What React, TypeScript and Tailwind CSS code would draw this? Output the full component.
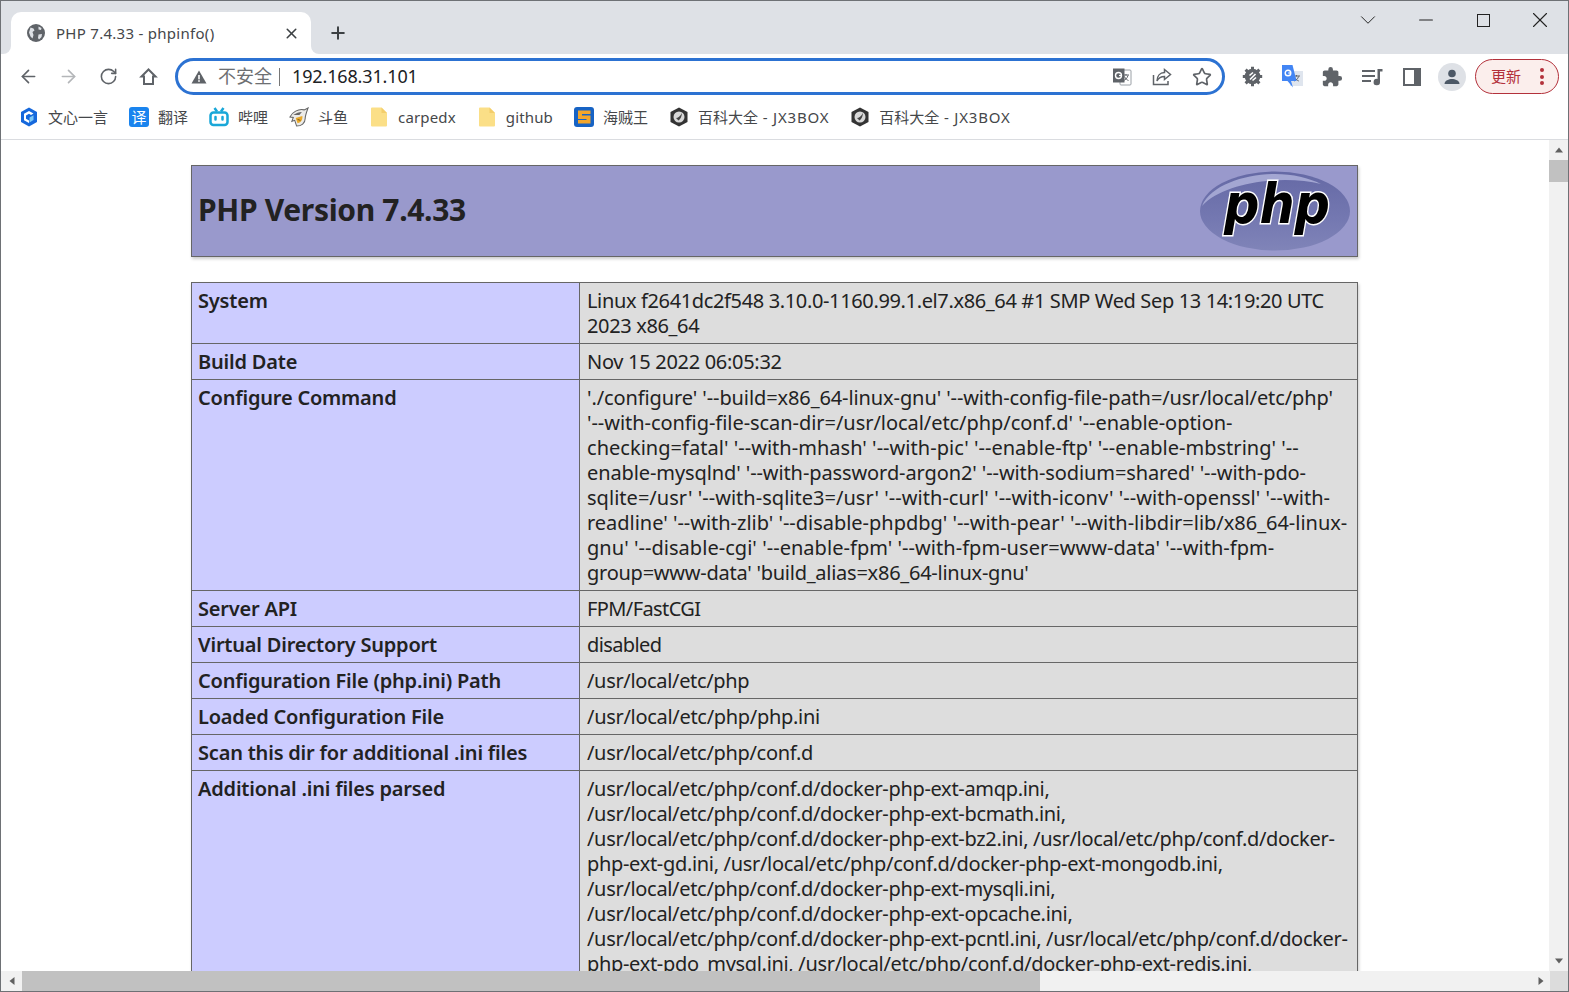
import { ArrowLeft, ArrowRight, ChevronDown, Minus, Plus, RotateCw, Star, X } from 'lucide-react';
import { MdExtension } from 'react-icons/md';
import type { ReactNode } from 'react';

// letter spacing is per row, the fallback font's digits and slashes run wider than the original's
const rows: { label: string; tracking: string; lines: string[]; lineTracking?: string[] }[] = [
  {
    label: 'System',
    tracking: 'tracking-[-0.36px]',
    lines: ['Linux f2641dc2f548 3.10.0-1160.99.1.el7.x86_64 #1 SMP Wed Sep 13 14:19:20 UTC', '2023 x86_64'],
  },
  { label: 'Build Date', tracking: 'tracking-[-0.3px]', lines: ['Nov 15 2022 06:05:32'] },
  {
    label: 'Configure Command',
    tracking: '',
    lineTracking: [
      'tracking-[-0.1px]',
      'tracking-[-0.05px]',
      'tracking-[0.03px]',
      'tracking-[-0.1px]',
      'tracking-[0.03px]',
      'tracking-[-0.02px]',
      'tracking-[0.04px]',
      'tracking-[-0.25px]',
    ],
    lines: [
      "'./configure' '--build=x86_64-linux-gnu' '--with-config-file-path=/usr/local/etc/php'",
      "'--with-config-file-scan-dir=/usr/local/etc/php/conf.d' '--enable-option-",
      "checking=fatal' '--with-mhash' '--with-pic' '--enable-ftp' '--enable-mbstring' '--",
      "enable-mysqlnd' '--with-password-argon2' '--with-sodium=shared' '--with-pdo-",
      "sqlite=/usr' '--with-sqlite3=/usr' '--with-curl' '--with-iconv' '--with-openssl' '--with-",
      "readline' '--with-zlib' '--disable-phpdbg' '--with-pear' '--with-libdir=lib/x86_64-linux-",
      "gnu' '--disable-cgi' '--enable-fpm' '--with-fpm-user=www-data' '--with-fpm-",
      "group=www-data' 'build_alias=x86_64-linux-gnu'",
    ],
  },
  { label: 'Server API', tracking: 'tracking-[-0.6px]', lines: ['FPM/FastCGI'] },
  { label: 'Virtual Directory Support', tracking: 'tracking-[-0.6px]', lines: ['disabled'] },
  { label: 'Configuration File (php.ini) Path', tracking: 'tracking-[-0.33px]', lines: ['/usr/local/etc/php'] },
  { label: 'Loaded Configuration File', tracking: 'tracking-[-0.3px]', lines: ['/usr/local/etc/php/php.ini'] },
  { label: 'Scan this dir for additional .ini files', tracking: 'tracking-[-0.32px]', lines: ['/usr/local/etc/php/conf.d'] },
  {
    label: 'Additional .ini files parsed',
    tracking: 'tracking-[-0.32px]',
    lines: [
      '/usr/local/etc/php/conf.d/docker-php-ext-amqp.ini,',
      '/usr/local/etc/php/conf.d/docker-php-ext-bcmath.ini,',
      '/usr/local/etc/php/conf.d/docker-php-ext-bz2.ini, /usr/local/etc/php/conf.d/docker-',
      'php-ext-gd.ini, /usr/local/etc/php/conf.d/docker-php-ext-mongodb.ini,',
      '/usr/local/etc/php/conf.d/docker-php-ext-mysqli.ini,',
      '/usr/local/etc/php/conf.d/docker-php-ext-opcache.ini,',
      '/usr/local/etc/php/conf.d/docker-php-ext-pcntl.ini, /usr/local/etc/php/conf.d/docker-',
      'php-ext-pdo_mysql.ini, /usr/local/etc/php/conf.d/docker-php-ext-redis.ini,',
    ],
  },
];

const Globe = () => (
  <svg width="18" height="18" viewBox="0 0 18 18">
    <circle cx="9" cy="9" r="9" fill="#5f6368" />
    <path d="M3.500 3.500 6.500 4.500 7.500 6.500 5.500 8 6.500 11 5.500 14.500 3.500 12.500 2 8.500ZM11.500 2.500 14.500 4 14 6 11.500 5.500ZM11.500 10.500 15 10 14.500 13 12 15.500 11 14Z" fill="#dee1e6" />
  </svg>
);

const Warning = () => (
  <svg width="16" height="16" viewBox="0 0 16 16">
    <path d="M8 1.500 15.500 14.500H.5Z" fill="#5f6368" />
    <rect x="7.200" y="6" width="1.600" height="4.400" fill="#fff" />
    <rect x="7.200" y="11.200" width="1.600" height="1.600" fill="#fff" />
  </svg>
);

const Home = () => (
  <svg width="19" height="19" viewBox="0 0 19 19" fill="none" stroke="#5f6368" strokeWidth="2" strokeLinejoin="miter">
    <path d="M9.500 2.500 2.500 9.500H5V17H14V9.500H16.500Z" />
  </svg>
);

const TranslateBadge = () => (
  <svg width="20" height="20" viewBox="0 0 20 20">
    <rect x="8" y="3" width="11" height="15" rx="1" fill="#fff" stroke="#9aa0a6" />
    <path d="M11 8h6M14 7v1.500M16 8.500c-.8 3-3 4.500-4.500 5M12.500 9.500c.8 2 2.500 3.500 4 4" fill="none" stroke="#5f6368" strokeWidth="1" />
    <path d="M1 1.500h11.500v14H1Z" fill="#5f6368" />
    <circle cx="6.500" cy="8.500" r="3" fill="none" stroke="#fff" strokeWidth="1.400" />
    <path d="M7 8.500h3" stroke="#fff" strokeWidth="1.200" />
  </svg>
);

const ShareBox = () => (
  <svg width="20" height="20" viewBox="0 0 20 20" fill="none" stroke="#5f6368" strokeWidth="1.500">
    <path d="M1.500 8v9.500h14.500V14" />
    <path d="M12.500 2.500 18.500 7.500 12.500 12.500V9.500C9 9.500 6.500 11 5 14 5 9 8 5.700 12.500 5.500Z" />
  </svg>
);

const Gear = () => (
  <svg width="21" height="21" viewBox="0 0 21 21">
    <circle cx="10.500" cy="10.500" r="7.800" fill="#5f6368" />
    <path d="M10.500 0.800v19.400M.8 10.500h19.400M3.600 3.600l13.800 13.800M17.400 3.600 3.600 17.400" stroke="#5f6368" strokeWidth="3" />
    <path d="M8 13.500 13.500 8M7.500 9.500 11 6.500M14 11.500 10.500 14.500" fill="none" stroke="#fff" strokeWidth="1.600" />
  </svg>
);

const GoogleTranslate = () => (
  <svg width="22" height="24" viewBox="0 0 22 24">
    <rect x="9" y="6" width="13" height="15" fill="#dfe5ee" />
    <path d="M12 11h7M15.500 10v1.500M17.500 11.500c-.7 2.700-2.700 4-4 4.500M14 12.500c.8 1.800 2.300 3 3.800 3.500" fill="none" stroke="#5f6368" strokeWidth="1" />
    <path d="M1 0h10.500l4 16H10l2 6.500-5.500-6.500H1Z" fill="#4285f4" />
    <circle cx="7" cy="8" r="2.800" fill="none" stroke="#fff" strokeWidth="1.400" />
    <path d="M7.300 8h2.500" stroke="#fff" strokeWidth="1.200" />
  </svg>
);

const MediaQueue = () => (
  <svg width="21" height="18" viewBox="0 0 21 18" fill="#5f6368">
    <rect x="0" y="2" width="13" height="2" />
    <rect x="0" y="7" width="13" height="2" />
    <rect x="0" y="12" width="9" height="2" />
    <path d="M15.500 1H20.500V3.500H18V14a3.200 3.200 0 1 1-2.500-3Z" />
  </svg>
);

const SidePanel = () => (
  <svg width="18" height="18" viewBox="0 0 18 18">
    <rect width="18" height="18" fill="#5f6368" />
    <rect x="2" y="2" width="9" height="14" fill="#fff" />
  </svg>
);

const Avatar = () => (
  <div className="w-7 h-7 rounded-full bg-[#dee1e6] flex items-center justify-center">
    <svg width="18" height="18" viewBox="0 0 18 18" fill="#4c5866">
      <circle cx="9" cy="5.500" r="3.800" />
      <path d="M1.500 16c0-3.600 4.500-5 7.500-5s7.500 1.400 7.500 5Z" />
    </svg>
  </div>
);

const Wenxin = () => (
  <svg width="18" height="20" viewBox="0 0 18 20">
    <path d="M9 .5 17 5v10L9 19.500 1 15V5Z" fill="#1668dc" />
    <path d="M9 4 13.500 6.500 11 8 9 6.800 6 8.500v3.200l3 1.700V16l-5-2.800V6.800Z" fill="#fff" />
    <path d="M9.500 10.500 13.500 8.200v4.800l-4 2.500Z" fill="#7cc8f5" />
  </svg>
);

const Translate = () => (
  <div className="w-5 h-5 rounded-[3px] bg-[#1a84ee] flex items-center justify-center text-white text-[15px] leading-none">译</div>
);

const Bilibili = () => (
  <svg width="20" height="20" viewBox="0 0 20 20" fill="none" stroke="#19a7d8" strokeWidth="2.500">
    <rect x="1.500" y="5.500" width="17" height="12.500" rx="3" />
    <path d="M5.500 1 8 4.500M14.500 1 12 4.500" />
    <path d="M6.500 10v2.500M13.500 10v2.500" strokeLinecap="round" />
  </svg>
);

const Douyu = () => (
  <svg width="21" height="21" viewBox="0 0 21 21">
    <path d="M20 .5 16 2.500C10 1 3 5 1 10l3.500.5L3 14.500l3-1 2 6c5 0 9-3 9-8 0-3 1.500-7 3-11Z" fill="#ecebe8" stroke="#666" strokeWidth="1.100" />
    <path d="M4.500 8c3-2 6-3.200 9-3.200L11 8Z" fill="#666" />
    <path d="M7 11 14 9c.5 3-1 7-5 7.500Z" fill="#e9a92a" />
    <path d="M9 12.500l3 1" stroke="#7a5511" strokeWidth="1" />
  </svg>
);

const Folder = () => (
  <svg width="18" height="20" viewBox="0 0 18 20">
    <path d="M1 1.500A1 1 0 0 1 2 .5h9.500L17 6v12.500a1 1 0 0 1-1 1H2a1 1 0 0 1-1-1Z" fill="#fbdf87" />
    <path d="M11.500.5 17 6h-5.500Z" fill="#f3cd6b" />
  </svg>
);

const Sublime = () => (
  <svg width="20" height="20" viewBox="0 0 20 20">
    <rect width="20" height="20" rx="3" fill="#1763c4" />
    <path d="M4 3.500h12.500v3.500H8v1.500h8.500v8H4v-3.500h8.500V12H4Z" fill="#f3a62b" />
  </svg>
);

const Jx3box = () => (
  <svg width="20" height="20" viewBox="0 0 20 20">
    <path d="M10 .5 18.500 5v10L10 19.500 1.500 15V5Z" fill="#333" />
    <circle cx="10" cy="10" r="5.500" fill="#d8d8d8" />
    <path d="M7 11c2 0 4-1.500 6-5-.5 4-1.500 6-3.500 7.500Z" fill="#444" />
  </svg>
);

const bookmarks: { icon: ReactNode; label: string; suffix?: string; tracking?: string }[] = [
  { icon: <Wenxin />, label: '文心一言' },
  { icon: <Translate />, label: '翻译' },
  { icon: <Bilibili />, label: '哔哩' },
  { icon: <Douyu />, label: '斗鱼' },
  { icon: <Folder />, label: 'carpedx', tracking: 'tracking-[0.15px]' },
  { icon: <Folder />, label: 'github', tracking: 'tracking-[0.15px]' },
  { icon: <Sublime />, label: '海贼王' },
  { icon: <Jx3box />, label: '百科大全', suffix: ' - JX3BOX' },
  { icon: <Jx3box />, label: '百科大全', suffix: ' - JX3BOX' },
];

const PhpLogo = () => (
  <svg width="152" height="80" viewBox="0 0 152 80">
    <defs>
      <linearGradient id="phpRim" x1="0" y1="0" x2="0" y2="1">
        <stop offset="0" stopColor="#6569a5" />
        <stop offset="0.6" stopColor="#7478b1" />
        <stop offset="1" stopColor="#8084b8" />
      </linearGradient>
    </defs>
    <ellipse cx="76" cy="40" rx="75" ry="39.500" fill="url(#phpRim)" />
    <path d="M3 35C12 14 46 3 76 3c18 0 34 4 46 10C86 4 26 10 3 35Z" fill="#a3a6d2" />
    <text
      x="25"
      y="52"
      fontSize="56"
      fontWeight="700"
      fontStyle="italic"
      fill="#000"
      stroke="#fff"
      strokeWidth="3"
      paintOrder="stroke"
      textLength="106"
      lengthAdjust="spacingAndGlyphs"
      style={{ fontFamily: '"DejaVu Sans", sans-serif' }}
    >
      php
    </text>
  </svg>
);

const Tri = ({ d }: { d: string }) => (
  <svg width="8" height="8" viewBox="0 0 8 8" fill="#606060">
    <path d={d} />
  </svg>
);

export default function App() {
  return (
    <div className="w-[1569px] h-[992px] flex flex-col overflow-hidden border border-[#6e7175] bg-white font-['Noto_Sans','Noto_Sans_CJK_SC',sans-serif] text-[#222]">
      {/* title bar */}
      <div className="h-[53px] shrink-0 bg-[#dee1e6] flex items-end pl-[10px]">
        <div className="relative w-[300px] h-[42px] bg-white rounded-t-[10px] flex items-center pl-4 pr-[11px]">
          <div className="absolute -left-2 bottom-0 w-2 h-2 bg-white">
            <div className="w-full h-full bg-[#dee1e6] rounded-br-lg" />
          </div>
          <div className="absolute -right-2 bottom-0 w-2 h-2 bg-white">
            <div className="w-full h-full bg-[#dee1e6] rounded-bl-lg" />
          </div>
          <Globe />
          <span className="ml-[11px] text-[15px] tracking-[0.28px] text-[#45474a] flex-1">PHP 7.4.33 - phpinfo()</span>
          <X size={17} strokeWidth={2.2} className="text-[#3c4043]" />
        </div>
        <div className="ml-[17px] h-[42px] flex items-center">
          <Plus size={20} strokeWidth={2.4} className="text-[#3c4043]" />
        </div>
        <div className="flex-1 self-start flex justify-end items-center h-[38px] text-[#222]">
          <div className="w-[57.5px] flex justify-center"><ChevronDown size={26} strokeWidth={0.9} /></div>
          <div className="w-[57.5px] flex justify-center"><Minus size={22} strokeWidth={1.1} /></div>
          <div className="w-[57.5px] flex justify-center"><div className="w-[13px] h-[13px] border border-[#222]" /></div>
          <div className="w-[56px] flex justify-center"><X size={26} strokeWidth={1} /></div>
        </div>
      </div>

      {/* toolbar */}
      <div className="h-[43px] shrink-0 flex items-center pt-[2px] text-[#5f6368]">
        <div className="flex items-center w-[174px] pl-[7px]">
          <div className="w-10 flex justify-center"><ArrowLeft size={21} strokeWidth={1.9} /></div>
          <div className="w-10 flex justify-center"><ArrowRight size={21} strokeWidth={1.9} className="text-[#b4b6b9]" /></div>
          <div className="w-10 flex justify-center"><RotateCw size={19} strokeWidth={2} /></div>
          <div className="w-10 flex justify-center"><Home /></div>
        </div>
        <div className="w-[1050px] h-[37px] rounded-full border-[3px] border-[#2c72d2] flex items-center pl-[13px] pr-[10px]">
          <Warning />
          <span className="ml-[11px] text-[18px] text-[#6d6f72]">不安全</span>
          <span className="ml-[7px] w-px h-[18px] bg-[#777]" />
          <span className="ml-[12px] text-[18px] tracking-[-0.14px] text-[#202124]">192.168.31.101</span>
          <div className="ml-auto flex items-center gap-[20px]">
            <TranslateBadge />
            <ShareBox />
            <Star size={20} strokeWidth={2} />
          </div>
        </div>
        <div className="ml-[7px] flex items-center">
          <div className="w-10 flex justify-center"><Gear /></div>
          <div className="w-10 flex justify-center"><GoogleTranslate /></div>
          <div className="w-10 flex justify-center"><MdExtension size={22} /></div>
          <div className="w-10 flex justify-center"><MediaQueue /></div>
          <div className="w-10 flex justify-center"><SidePanel /></div>
          <div className="w-10 flex justify-center"><Avatar /></div>
        </div>
        <div className="ml-[3px] w-[84px] h-[35px] rounded-full border border-[#b3313b] bg-[#fbeeec] flex items-center pl-[15px] pr-[14px] text-[#b3313b]">
          <span className="text-[15px]">更新</span>
          <div className="ml-auto flex flex-col gap-[2.500px]">
            <span className="w-[4px] h-[4px] rounded-full bg-[#b3313b]" />
            <span className="w-[4px] h-[4px] rounded-full bg-[#b3313b]" />
            <span className="w-[4px] h-[4px] rounded-full bg-[#b3313b]" />
          </div>
        </div>
      </div>

      {/* bookmarks */}
      <div className="h-[43px] shrink-0 flex items-center gap-[21px] pl-[18px] pb-[2px] border-b border-[#dadce0]">
        {bookmarks.map((b, i) => (
          <div key={i} className="flex items-center gap-[9px]">
            <div className="w-5 h-5 flex items-center justify-center">{b.icon}</div>
            <span className={`text-[15px] text-[#45474a] whitespace-pre ${b.tracking ?? ''}`}>
              {b.label}
              {b.suffix && <span className="tracking-[0.8px]">{b.suffix}</span>}
            </span>
          </div>
        ))}
      </div>

      {/* viewport */}
      <div className="flex-1 min-h-0 flex flex-col">
        <div className="flex-1 min-h-0 flex">
          <div className="flex-1 min-w-0 overflow-hidden pl-[190px] pt-[25px]">
            <div className="w-[1167px] h-[92px] bg-[#9999cc] border border-[#666] shadow-[1px_2px_3px_#ccc] flex items-center justify-between pl-[6px] pr-[6px]">
              <h1 className="text-[30px] font-bold leading-none tracking-[-0.33px] pb-[2px] text-[#222]">PHP Version 7.4.33</h1>
              <PhpLogo />
            </div>
            <table className="mt-[25px] w-[1166px] table-fixed border-collapse shadow-[1px_2px_3px_#ccc]">
              <colgroup>
                <col className="w-[388px]" />
                <col className="w-[778px]" />
              </colgroup>
              <tbody>
                {rows.map((r) => (
                  <tr key={r.label}>
                    <td className="border border-[#666] bg-[#ccccff] px-[6px] py-[5px] align-top text-[20px] leading-[25px] font-semibold tracking-[-0.2px] whitespace-nowrap">
                      {r.label}
                    </td>
                    <td className="border border-[#666] bg-[#dddddd] px-[7px] py-[5px] align-top text-[20px] leading-[25px]">
                      {r.lines.map((l, i) => (
                        <div key={i} className={`whitespace-nowrap ${r.lineTracking ? r.lineTracking[i] : r.tracking}`}>
                          {l}
                        </div>
                      ))}
                    </td>
                  </tr>
                ))}
              </tbody>
            </table>
          </div>
          {/* vertical scrollbar */}
          <div className="w-[19px] shrink-0 bg-[#f1f1f1] flex flex-col items-center">
            <div className="h-[20px] w-full flex items-center justify-center"><Tri d="M4 1.500 8 6.500H0Z" /></div>
            <div className="h-[22px] w-full bg-[#c1c1c1]" />
            <div className="mt-auto h-[20px] w-full flex items-center justify-center"><Tri d="M0 1.500H8L4 6.500Z" /></div>
          </div>
        </div>
        {/* horizontal scrollbar */}
        <div className="h-[20px] shrink-0 bg-[#f1f1f1] flex items-center">
          <div className="w-[21px] h-full flex items-center justify-center"><Tri d="M6.500 0V8L1.500 4Z" /></div>
          <div className="w-[1018px] h-full bg-[#c1c1c1]" />
          <div className="ml-auto w-[19px] h-full flex items-center justify-center"><Tri d="M1.500 0V8L6.500 4Z" /></div>
          <div className="w-[18px] h-full bg-[#dcdcdc]" />
        </div>
      </div>
    </div>
  );
}
